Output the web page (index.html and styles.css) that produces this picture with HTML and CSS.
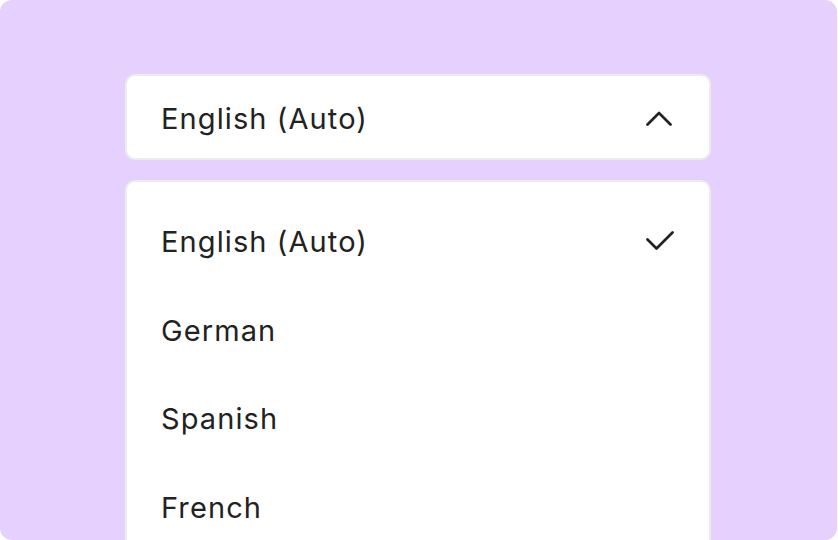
FILE: index.html
```html
<!DOCTYPE html>
<html>
<head>
<meta charset="utf-8">
<link rel="stylesheet" href="styles.css">
</head>
<body>
<div class="panel">
  <div class="select">
    <div class="trigger">
      <span class="label">English (Auto)</span>
      <svg class="icon" width="28" height="28" viewBox="0 0 28 28" fill="none" stroke="#222" stroke-width="2.7" stroke-linecap="round" stroke-linejoin="round"><path d="M1.5 20.5 L13 9 L24.5 20.5"/></svg>
    </div>
    <ul class="list">
      <li class="item selected"><span class="label">English (Auto)</span>
        <svg class="icon" width="28" height="28" viewBox="0 0 28 28" fill="none" stroke="#222" stroke-width="2.7" stroke-linecap="round" stroke-linejoin="round"><path d="M1.5 12.5 L10.5 21.5 L26.5 5.5"/></svg>
      </li>
      <li class="item"><span class="label">German</span></li>
      <li class="item"><span class="label">Spanish</span></li>
      <li class="item"><span class="label">French</span></li>
    </ul>
  </div>
</div>
</body>
</html>
```

FILE: styles.css
```css
html, body {
  margin: 0;
  padding: 0;
  background: #ffffff;
}
body {
  font-family: Inter, "Noto Sans", sans-serif;
  color: #222222;
}
.panel {
  width: 837px;
  height: 540px;
  background: #e6d0fe;
  border-radius: 12px;
  overflow: hidden;
  box-sizing: border-box;
  padding: 74px 0 0 125px;
}
.select {
  width: 586px;
  display: flex;
  flex-direction: column;
  gap: 20px;
}
.trigger {
  height: 86px;
  box-sizing: border-box;
  background: #ffffff;
  border: 2px solid #ececec;
  border-radius: 10px;
  display: flex;
  align-items: center;
  justify-content: space-between;
  padding: 2px 35px 0 34px;
}
.label {
  font-size: 29px;
  line-height: 1;
  letter-spacing: 1.1px;
}
.icon {
  display: block;
  flex: none;
}
.list {
  list-style: none;
  margin: 0;
  background: #ffffff;
  border: 2px solid #ececec;
  border-radius: 10px;
  padding: 15px 35px 0 34px;
  height: 500px;
}
.item {
  height: 88.7px;
  display: flex;
  align-items: center;
  justify-content: space-between;
}
```
